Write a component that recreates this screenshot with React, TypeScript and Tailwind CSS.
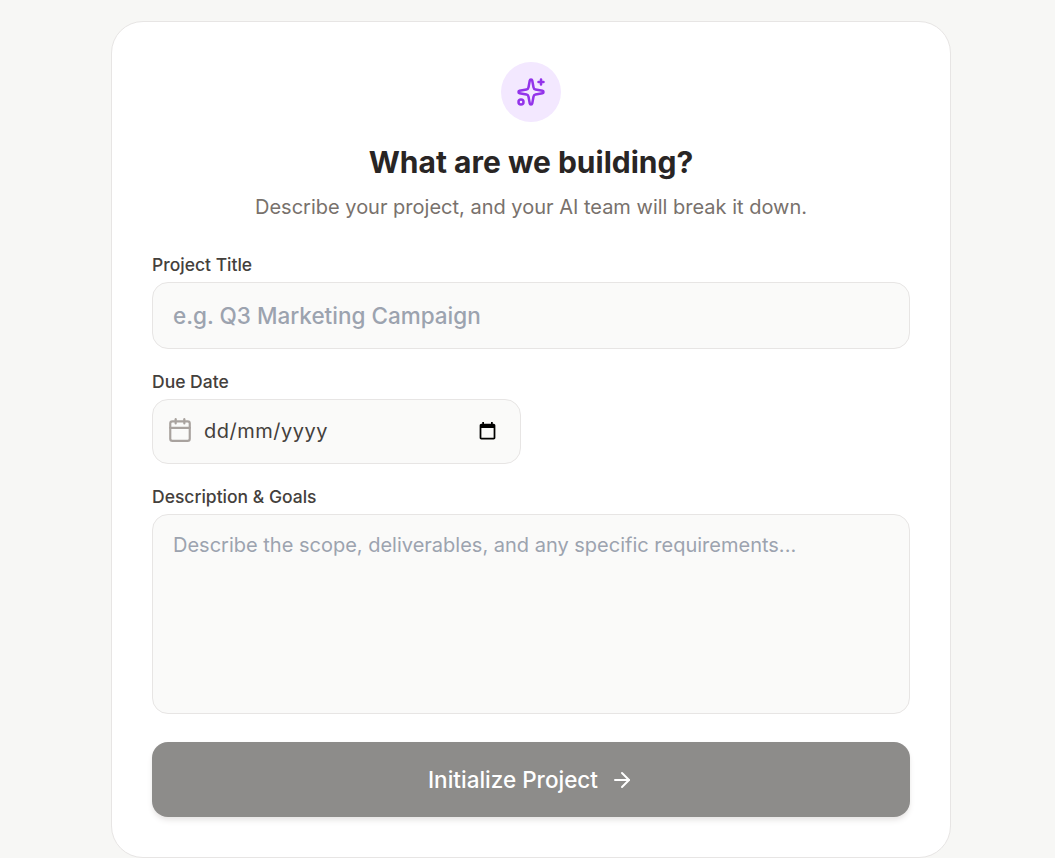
import { ArrowRight, Calendar } from "lucide-react";

function Sparkle() {
  return (
    <svg
      width="30"
      height="30"
      viewBox="0 0 24 24"
      fill="none"
      stroke="currentColor"
      strokeWidth="2"
      strokeLinecap="round"
      strokeLinejoin="round"
    >
      <path d="M11.017 2.814a1 1 0 0 1 1.966 0l1.051 5.558a2 2 0 0 0 1.594 1.594l5.558 1.051a1 1 0 0 1 0 1.966l-5.558 1.051a2 2 0 0 0-1.594 1.594l-1.051 5.558a1 1 0 0 1-1.966 0l-1.051-5.558a2 2 0 0 0-1.594-1.594l-5.558-1.051a1 1 0 0 1 0-1.966l5.558-1.051a2 2 0 0 0 1.594-1.594z" />
      <path d="M20 2v4" />
      <path d="M22 4h-4" />
      <circle cx="4" cy="20" r="2" />
    </svg>
  );
}

// same glyph the browser draws for a date field's picker
function PickerIcon() {
  return (
    <svg width="21" height="21" viewBox="0 0 24 24" fill="black">
      <path d="M19 3h-1V1h-2v2H8V1H6v2H5c-1.11 0-1.99.9-1.99 2L3 19c0 1.1.89 2 2 2h14c1.1 0 2-.9 2-2V5c0-1.1-.9-2-2-2zm0 16H5V8h14v11z" />
    </svg>
  );
}

export default function App() {
  return (
    <div className="min-h-[858px] bg-[#f7f7f5] pt-[21px] pl-[111px] font-['Inter',sans-serif]">
      <form className="w-[840px] rounded-[32px] border border-[#e7e5e4] bg-white p-10">
        <div className="flex flex-col items-center">
          <div className="flex h-[60px] w-[60px] items-center justify-center rounded-full bg-[#f3e8ff] text-[#9333ea]">
            <Sparkle />
          </div>
          <h1 className="mt-[22px] text-[30px] leading-[36px] font-bold text-[#292524]">
            What are we building?
          </h1>
          <p className="mt-[13px] text-[20px] leading-[28px] text-[#78716c]">
            Describe your project, and your AI team will break it down.
          </p>
        </div>

        <label className="mt-[32px] block text-[17.5px] leading-[24px] font-medium text-[#44403c]">
          Project Title
        </label>
        <input
          placeholder="e.g. Q3 Marketing Campaign"
          className="mt-[5px] block h-[67px] w-full rounded-[16px] border border-[#e7e5e4] bg-[#fafaf9] px-5 text-[22.5px] font-medium text-[#1c1917] placeholder:text-[#9ca3af]"
        />

        <div className="mt-[21px] grid grid-cols-2 gap-5">
          <div>
            <label className="block text-[17.5px] leading-[24px] font-medium text-[#44403c]">
              Due Date
            </label>
            <div className="mt-[5px] flex h-[65px] items-center rounded-[16px] border border-[#e7e5e4] bg-[#fafaf9] pr-[22px] pl-[14px]">
              <Calendar size={26} className="mt-[-4px] shrink-0 text-[#a8a29e]" />
              <input
                readOnly
                value="dd/mm/yyyy"
                className="mt-[-1px] ml-[11px] min-w-0 flex-1 text-[20px] tracking-[0.5px] text-[#44403c] outline-none"
              />
              <PickerIcon />
            </div>
          </div>
        </div>

        <label className="mt-[21px] block text-[17.5px] leading-[24px] font-medium text-[#44403c]">
          Description & Goals
        </label>
        <textarea
          placeholder="Describe the scope, deliverables, and any specific requirements..."
          className="mt-[5px] block h-[200px] w-full resize-none rounded-[16px] border border-[#e7e5e4] bg-[#fafaf9] px-5 py-4 text-[20px] leading-[28px] placeholder:text-[#9ca3af]"
        />

        <button
          type="button"
          className="mt-[28px] flex h-[75px] w-full items-center justify-center gap-3 rounded-[16px] bg-[#8d8c8a] text-[22.5px] font-medium text-white shadow-md shadow-stone-200"
        >
          Initialize Project
          <ArrowRight size={24} />
        </button>
      </form>
    </div>
  );
}
